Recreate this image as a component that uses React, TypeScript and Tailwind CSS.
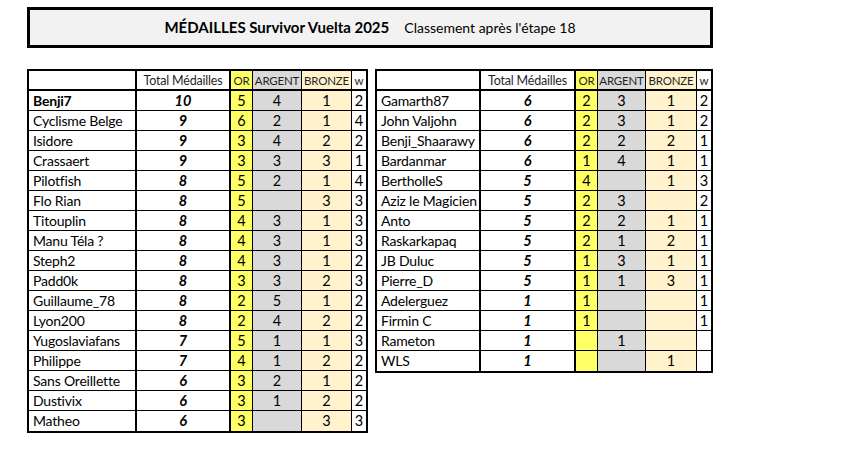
import React from "react";

type Row = [string, number, string, string, string, string];

const left: Row[] = [
  ["Benji7", 10, "5", "4", "1", "2"],
  ["Cyclisme Belge", 9, "6", "2", "1", "4"],
  ["Isidore", 9, "3", "4", "2", "2"],
  ["Crassaert", 9, "3", "3", "3", "1"],
  ["Pilotfish", 8, "5", "2", "1", "4"],
  ["Flo Rian", 8, "5", "", "3", "3"],
  ["Titouplin", 8, "4", "3", "1", "3"],
  ["Manu Téla ?", 8, "4", "3", "1", "3"],
  ["Steph2", 8, "4", "3", "1", "2"],
  ["Padd0k", 8, "3", "3", "2", "3"],
  ["Guillaume_78", 8, "2", "5", "1", "2"],
  ["Lyon200", 8, "2", "4", "2", "2"],
  ["Yugoslaviafans", 7, "5", "1", "1", "3"],
  ["Philippe", 7, "4", "1", "2", "2"],
  ["Sans Oreillette", 6, "3", "2", "1", "2"],
  ["Dustivix", 6, "3", "1", "2", "2"],
  ["Matheo", 6, "3", "", "3", "3"],
];

const right: Row[] = [
  ["Gamarth87", 6, "2", "3", "1", "2"],
  ["John Valjohn", 6, "2", "3", "1", "2"],
  ["Benji_Shaarawy", 6, "2", "2", "2", "1"],
  ["Bardanmar", 6, "1", "4", "1", "1"],
  ["BertholleS", 5, "4", "", "1", "3"],
  ["Aziz le Magicien", 5, "2", "3", "", "2"],
  ["Anto", 5, "2", "2", "1", "1"],
  ["Raskarkapaq", 5, "2", "1", "2", "1"],
  ["JB Duluc", 5, "1", "3", "1", "1"],
  ["Pierre_D", 5, "1", "1", "3", "1"],
  ["Adelerguez", 1, "1", "", "", "1"],
  ["Firmin C", 1, "1", "", "", "1"],
  ["Rameton", 1, "", "1", "", ""],
  ["WLS", 1, "", "", "1", ""],
];

function MedalTable({ rows, cols, width }: { rows: Row[]; cols: string; width: string }) {
  const font = { fontFamily: "Lato, 'Liberation Sans', sans-serif" };
  const hd = "h-[20px] border-b-2 border-black text-[11.5px] tracking-[-0.2px] leading-[19px] text-center whitespace-nowrap overflow-visible";
  return (
    <div className={`border-2 border-black ${width}`} style={font}>
      <div className={`grid ${cols} text-[#1f1f1f]`}>
        <div className="h-[20px] border-r-2 border-b-2 border-black bg-white" />
        <div className={`${hd} border-r-2 bg-white text-[12.5px]`}>Total Médailles</div>
        <div className={`${hd} border-r bg-[#ffff66]`}>OR</div>
        <div className={`${hd} border-r bg-[#d9d9d9]`}>ARGENT</div>
        <div className={`${hd} border-r bg-[#fff2cc]`}>BRONZE</div>
        <div className={`${hd} bg-white`}>w</div>
        {rows.map((r, i) => {
          const last = i === rows.length - 1;
          const b = last ? "" : "border-b";
          const cell = `h-[20px] ${b} border-black text-center text-[14.5px] leading-[19px] text-black`;
          return (
            <React.Fragment key={r[0]}>
              <div className={`h-[20px] ${b} border-r-2 border-black pl-[4px] text-[14px] tracking-[-0.2px] leading-[19px] whitespace-nowrap overflow-hidden text-black ${i === 0 && r[0] === "Benji7" ? "font-bold" : ""}`}>{r[0]}</div>
              <div className={`${cell} border-r-2 font-bold italic`}>{r[1]}</div>
              <div className={`${cell} border-r bg-[#ffff66]`}>{r[2]}</div>
              <div className={`${cell} border-r bg-[#d9d9d9]`}>{r[3]}</div>
              <div className={`${cell} border-r bg-[#fff2cc]`}>{r[4]}</div>
              <div className={cell}>{r[5]}</div>
            </React.Fragment>
          );
        })}
      </div>
    </div>
  );
}

export default function App() {
  return (
    <div className="w-[841px] h-[472px] bg-white pt-[7px] pl-[27px]">
      <div
        className="w-[686px] h-[41px] border-[3px] border-black bg-[#f2f2f2] flex items-center justify-center gap-[15px] text-black"
        style={{ fontFamily: "Lato, 'Liberation Sans', sans-serif" }}
      >
        <span className="text-[15px] font-bold">MÉDAILLES Survivor Vuelta 2025</span>
        <span className="text-[14px]">Classement après l'étape 18</span>
      </div>
      <div className="flex items-start gap-[7px] mt-[21px]">
        <MedalTable rows={left} width="w-[341px]" cols="grid-cols-[108px_94px_22px_49px_50px_14px]" />
        <MedalTable rows={right} width="w-[338px]" cols="grid-cols-[104px_95px_22px_48px_51px_14px]" />
      </div>
    </div>
  );
}
